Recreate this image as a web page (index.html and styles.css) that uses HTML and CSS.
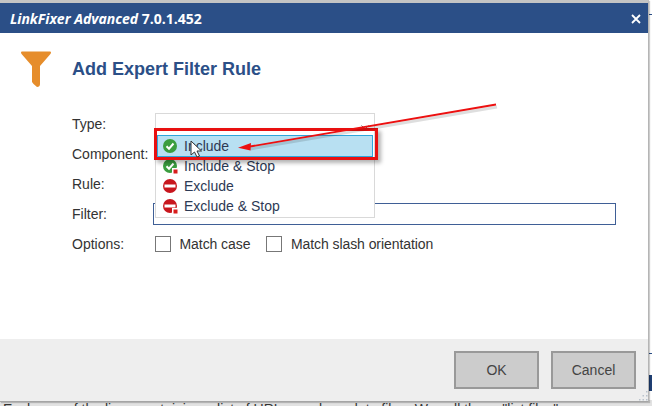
FILE: index.html
```html
<!DOCTYPE html>
<html lang="en">
<head>
<meta charset="utf-8">
<title>LinkFixer Advanced</title>
<link rel="stylesheet" href="styles.css">
</head>
<body>
<div class="backdrop">
  <i class="bg-line bg-line-top"></i>
  <i class="bg-line bg-line-mid"></i>
  <i class="bg-block"></i>
  <p class="behind-text">Each one of the lines containing a list of URLs can be a data file. &nbsp; We call these "list files".</p>
</div>
<section class="dialog">
  <header class="titlebar">
    <h1 class="app-title"><em>LinkFixer Advanced</em> 7.0.1.452</h1>
    <svg class="close" viewBox="0 0 10 10"><path d="M1 1 9 9M9 1 1 9"/></svg>
  </header>
  <main class="body">
    <div class="heading">
      <svg class="funnel" viewBox="0 0 32 36"><path d="M1 1.500Q1 .5 2 .5H30Q31 .5 31 1.500Q31 2.500 30 3.500L20 15V33Q20 36 17 36Q13 33 12 31V15L2 3.500Q1 2.500 1 1.500Z"/></svg>
      <h2 class="heading-text">Add Expert Filter Rule</h2>
    </div>
    <form class="form">
      <div class="row"><span class="label">Type:</span><div class="select"><svg class="chev" viewBox="0 0 8 5"><path d="M.5.5 4 4 7.500.5"/></svg></div></div>
      <div class="row"><span class="label">Component:</span></div>
      <div class="row"><span class="label">Rule:</span></div>
      <div class="row"><span class="label">Filter:</span><div class="filter-input"></div></div>
      <div class="row"><span class="label">Options:</span>
        <div class="checks">
          <span class="check"><i class="box"></i>Match case</span>
          <span class="check"><i class="box"></i>Match slash orientation</span>
        </div>
      </div>
    </form>
  </main>
  <footer class="footer">
    <button class="btn" type="button">OK</button>
    <button class="btn" type="button">Cancel</button>
    <svg class="grip" viewBox="0 0 12 10"><g><rect x="10" y="0" width="1.500" height="1.500"/><rect x="6.500" y="4" width="1.500" height="1.500"/><rect x="10" y="4" width="1.500" height="1.500"/><rect x="3" y="8" width="1.500" height="1.500"/><rect x="6.500" y="8" width="1.500" height="1.500"/><rect x="10" y="8" width="1.500" height="1.500"/></g></svg>
  </footer>
</section>

<ul class="menu">
  <li class="item selected">
    <svg class="ico" viewBox="0 0 16 16"><circle cx="8" cy="8" r="7" fill="#3a9d3f"/><path class="tick" d="M4.500 8.200 7 10.700 11.500 5.500"/></svg>Include</li>
  <li class="item">
    <svg class="ico" viewBox="0 0 16 16"><circle cx="8" cy="8" r="7" fill="#3a9d3f"/><path class="tick" d="M4.500 8.200 7 10.700 11.500 5.500"/><rect x="10" y="10" width="6" height="6" fill="#fff"/><rect x="11.500" y="11.500" width="4" height="4" fill="#d81c1c"/></svg>Include &amp; Stop</li>
  <li class="item">
    <svg class="ico" viewBox="0 0 16 16"><circle cx="8" cy="8" r="7" fill="#c8161d"/><rect x="2.500" y="6.500" width="11" height="3" fill="#fff"/></svg>Exclude</li>
  <li class="item">
    <svg class="ico" viewBox="0 0 16 16"><circle cx="8" cy="8" r="7" fill="#c8161d"/><rect x="2.500" y="6.500" width="11" height="3" fill="#fff"/><rect x="10" y="10" width="6" height="6" fill="#fff"/><rect x="11.500" y="11.500" width="4" height="4" fill="#d81c1c"/></svg>Exclude &amp; Stop</li>
</ul>

<div class="callout"></div>
<svg class="arrow" viewBox="0 0 652 406">
  <path class="arrow-shadow" d="M497 107 250 149"/>
  <path class="arrow-line" d="M496 104.500 250 146.500"/>
  <path class="arrow-head" d="M238 147.800 251 143 250.500 150.500Z"/>
</svg>
<svg class="cursor" viewBox="0 0 12 18"><path d="M1 1V15L4.500 12 7 17 9.500 16 7 11H11.500Z"/></svg>
</body>
</html>
```
FILE: styles.css
```css
* { box-sizing: border-box; }
html, body { margin: 0; height: 100%; }
body {
  position: relative;
  width: 652px;
  height: 406px;
  overflow: hidden;
  background: #fff;
  font-family: "Liberation Sans", Arial, sans-serif;
  color: #333;
}
.backdrop {
  position: absolute;
  inset: 0;
  background: #fff;
}
.bg-line { position: absolute; left: 649px; width: 3px; height: 1px; background: #2b4f87; }
.bg-line-top { top: 14px; }
.bg-line-mid { top: 353px; }
.bg-block { position: absolute; left: 649px; top: 375px; width: 3px; height: 16px; background: #1f3f73; }
.behind-text {
  position: absolute;
  left: 0;
  top: 400px;
  width: 652px;
  height: 6px;
  margin: 0;
  padding: 1px 0 0 3px;
  overflow: hidden;
  background: #e2e2e2;
  font-size: 14px;
  line-height: 16px;
  white-space: nowrap;
  color: #333;
}
.dialog {
  position: absolute;
  left: 0;
  top: 0;
  width: 649px;
  height: 402px;
  display: flex;
  flex-direction: column;
  background: #fff;
  border-top: 3px solid #c4c4c4;
  border-right: 1px solid #b5b5b5;
  border-bottom: 1px solid #a5a5a5;
  box-shadow: 1px 1px 1px rgba(0,0,0,.2);
}
.titlebar {
  height: 30px;
  flex: none;
  display: flex;
  align-items: center;
  justify-content: space-between;
  padding: 1px 7px 0 10px;
  background: #2b4f87;
  color: #fff;
}
.app-title {
  margin: 0;
  font: 700 14px "Open Sans", sans-serif;
}
.app-title em { font-style: italic; }
.close { width: 10px; height: 10px; }
.close path { stroke: #fff; stroke-width: 1.800; fill: none; }
.body { flex: 1; min-height: 0; background: #fff; }
.heading {
  display: flex;
  align-items: center;
  padding: 1px 0 0 20px;
  height: 71px;
}
.funnel { width: 32px; height: 36px; fill: #e68d2b; flex: none; }
.heading-text {
  margin: 0 0 0 20px;
  font-size: 18px;
  font-weight: 700;
  color: #2b4f87;
}
.form { padding: 5px 0 0 72px; }
.row { display: flex; align-items: center; height: 30px; font-size: 14px; }
.label { width: 81px; flex: none; color: #333; }
.select {
  width: 220px;
  height: 22px;
  margin-left: 2px;
  border: 1px solid #d9d9d9;
  display: flex;
  align-items: center;
  justify-content: flex-end;
  padding-right: 5px;
}
.chev { width: 8px; height: 5px; margin-top: 6px; fill: none; stroke: #666; stroke-width: 1; }
.filter-input {
  width: 463px;
  height: 22px;
  border: 1px solid #3f5f96;
}
.checks { display: flex; margin-left: 2px; }
.check { display: flex; align-items: center; color: #333; margin-right: 16px; letter-spacing: -.005em; }
.box {
  width: 16px;
  height: 16px;
  margin-right: 8.500px;
  border: 1px solid #777;
  background: #fff;
}
.footer {
  position: relative;
  height: 62px;
  flex: none;
  background: #eee;
  display: flex;
  justify-content: flex-end;
  align-items: flex-start;
  gap: 12px;
  padding: 12px 12px 0 0;
}
.btn {
  width: 85px;
  height: 38px;
  background: #ccc;
  border: 2px solid #999;
  font: 14px "Liberation Sans", sans-serif;
  color: #444;
  padding: 0;
}
.grip {
  position: absolute;
  right: 0;
  bottom: 0;
  width: 12px;
  height: 10px;
  fill: #b9c2cc;
}
.menu {
  position: absolute;
  left: 155px;
  top: 130px;
  width: 220px;
  height: 88px;
  margin: 0;
  padding: 6px 2px 0 2px;
  list-style: none;
  background: #fff;
  border: 1px solid #d9d9d9;
  border-top: 0;
}
.item {
  height: 20px;
  display: flex;
  align-items: center;
  font-size: 14px;
  color: #2d3a55;
  padding-left: 4px;
}
.item.selected {
  background: #b8e0f2;
  outline: 1px solid #2ea6dc;
}
.ico { width: 16px; height: 16px; margin-right: 6px; flex: none; }
.tick { fill: none; stroke: #fff; stroke-width: 2; }
.callout {
  position: absolute;
  left: 154px;
  top: 128px;
  width: 224px;
  height: 32px;
  border: 3px solid #e81010;
  box-shadow: 3px 3px 4px rgba(0,0,0,.3);
}
.arrow { position: absolute; left: 0; top: 0; width: 652px; height: 406px; }
.arrow-line { stroke: #ec1010; stroke-width: 1.800; fill: none; }
.arrow-shadow { stroke: rgba(0,0,0,.13); stroke-width: 3; fill: none; }
.arrow-head { fill: #ec1010; }
.cursor {
  position: absolute;
  left: 190px;
  top: 140px;
  width: 12px;
  height: 18px;
  fill: #fff;
  stroke: #333;
  stroke-width: 1;
}
```
